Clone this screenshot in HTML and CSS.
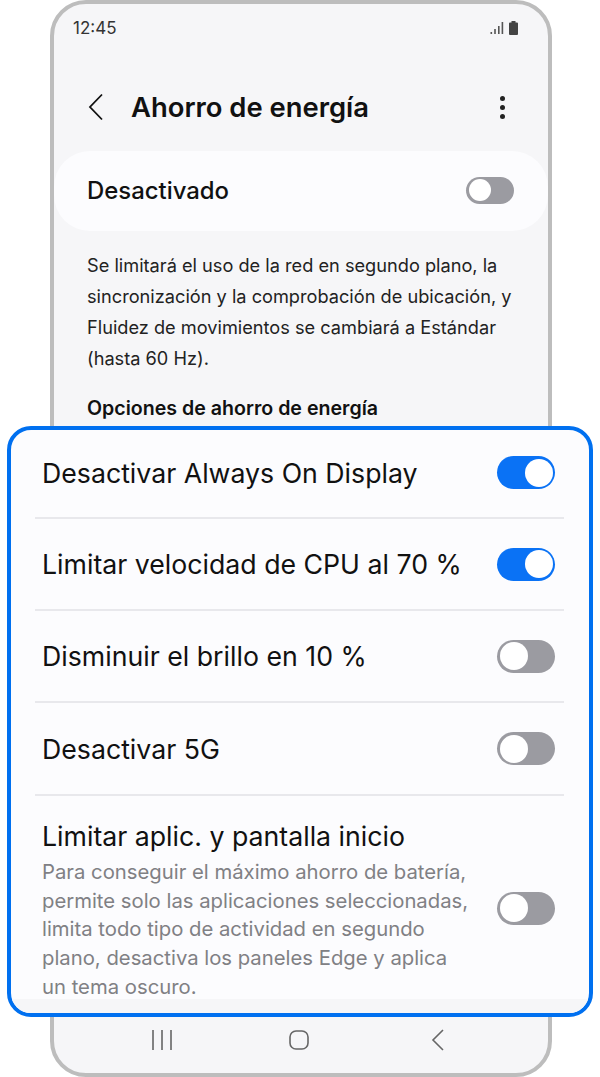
FILE: index.html
```html
<!DOCTYPE html>
<html lang="es">
<head>
    <meta charset="UTF-8">
    <meta name="viewport" content="width=device-width, initial-scale=1.0">
    <title>Ahorro de energía</title>
    <link rel="stylesheet" href="styles.css">
</head>
<body>
    <div class="phone">
        <div class="status-bar">
            <span class="clock">12:45</span>
            <svg class="status-icons" width="30" height="16" viewBox="0 0 30 16">
                <rect x="0.5" y="12" width="1.6" height="2" fill="#555"/>
                <rect x="4.2" y="9" width="1.6" height="5" fill="#555"/>
                <rect x="8" y="6" width="1.6" height="8" fill="#555"/>
                <rect x="11.6" y="2" width="1.6" height="12" fill="#555"/>
                <path d="M19 3.5 q0-1 1-1 h1.5 v-1.5 h4 v1.5 h1.5 q1 0 1 1 v10.5 q0 1-1 1 h-7 q-1 0-1-1z" fill="#444"/>
            </svg>
        </div>

        <div class="app-bar">
            <svg class="back" width="18" height="28" viewBox="0 0 18 28">
                <path d="M15 1.5 L3 14 L15 26.5" fill="none" stroke="#111" stroke-width="1.8"/>
            </svg>
            <h1>Ahorro de energía</h1>
            <div class="more"><i></i><i></i><i></i></div>
        </div>

        <div class="master-card">
            <span>Desactivado</span>
            <div class="switch small"></div>
        </div>

        <p class="intro">Se limitará el uso de la red en segundo plano, la sincronización y la comprobación de ubicación, y Fluidez de movimientos se cambiará a Estándar (hasta 60 Hz).</p>
        <h2>Opciones de ahorro de energía</h2>

        <div class="panel">
            <div class="row first">
                <span class="row-title">Desactivar Always On Display</span>
                <div class="switch on"></div>
            </div>
            <div class="row">
                <span class="row-title">Limitar velocidad de CPU al 70 %</span>
                <div class="switch on"></div>
            </div>
            <div class="row">
                <span class="row-title">Disminuir el brillo en 10 %</span>
                <div class="switch"></div>
            </div>
            <div class="row fourth">
                <span class="row-title">Desactivar 5G</span>
                <div class="switch"></div>
            </div>
            <div class="row tall">
                <div class="row-text">
                    <span class="row-title">Limitar aplic. y pantalla inicio</span>
                    <p>Para conseguir el máximo ahorro de batería, permite solo las aplicaciones seleccionadas, limita todo tipo de actividad en segundo plano, desactiva los paneles Edge y aplica un tema oscuro.</p>
                </div>
                <div class="switch"></div>
            </div>
        </div>

        <div class="nav-bar">
            <svg class="nav-recent" width="22" height="22" viewBox="0 0 22 22">
                <path d="M2 1 V21 M11 1 V21 M20 1 V21" fill="none" stroke="#666" stroke-width="1.6"/>
            </svg>
            <svg class="nav-home" width="20" height="22" viewBox="0 0 20 22">
                <rect x="1" y="2" width="18" height="18" rx="6" fill="none" stroke="#666" stroke-width="1.6"/>
            </svg>
            <svg class="nav-back" width="14" height="22" viewBox="0 0 14 22">
                <path d="M12 1 L2 11 L12 21" fill="none" stroke="#666" stroke-width="1.6"/>
            </svg>
        </div>
    </div>
</body>
</html>
```

FILE: styles.css
```css
* {
    margin: 0;
    padding: 0;
    box-sizing: border-box;
}

body {
    font-family: "Inter", "Liberation Sans", sans-serif;
    background-color: #fff;
    color: #111;
    height: 1077px;
    overflow: hidden;
}

.phone {
    position: relative;
    width: 502px;
    height: 1077px;
    margin-left: 50px;
    background-color: #f6f6f8;
    border: 4px solid #bdbdbd;
    border-radius: 36px;
    display: flex;
    flex-direction: column;
}

.status-bar {
    display: flex;
    justify-content: space-between;
    align-items: center;
    height: 24px;
    margin-top: 12px;
    padding: 0 28px 0 19px;
}

.clock {
    font-size: 17px;
    color: #333;
}

.app-bar {
    display: flex;
    align-items: center;
    height: 40px;
    margin-top: 47px;
    padding: 0 43px 0 33px;
}

.back {
    margin-right: 26px;
}

h1 {
    flex: 1;
    font-size: 27.4px;
    font-weight: 600;
    color: #111;
}

.more {
    display: flex;
    flex-direction: column;
    gap: 4px;
}

.more i {
    width: 5px;
    height: 5px;
    border-radius: 50%;
    background-color: #222;
}

.master-card {
    display: flex;
    justify-content: space-between;
    align-items: center;
    height: 80px;
    margin: 24px 0 0 0;
    padding: 0 34px 2px 33px;
    background-color: #fcfcfe;
    border-radius: 36px;
    font-size: 23.9px;
    font-weight: 500;
}

.intro {
    margin: 19px 32px 0 33px;
    font-size: 18.2px;
    line-height: 31px;
    color: #222;
}

h2 {
    margin: 22px 0 0 33px;
    font-size: 19.6px;
    font-weight: 600;
    color: #111;
}

.panel {
    position: absolute;
    left: -47px;
    top: 422px;
    width: 586px;
    height: 591px;
    padding: 0 25px 0 24px;
    background-color: #fcfcfe;
    border: 4px solid #0070f0;
    border-radius: 24px;
    overflow: hidden;
    z-index: 2;
}

/* grey strip where the scrolled list stops */
.panel::after {
    content: "";
    position: absolute;
    left: 0;
    right: 0;
    bottom: 0;
    height: 14px;
    background-color: #f6f6f8;
}

.row {
    display: flex;
    justify-content: space-between;
    align-items: center;
    height: 92px;
    border-bottom: 2px solid #e8e8ec;
    padding: 0 9px 0 7px;
}

.row.first {
    height: 89px;
    padding-bottom: 2px;
}

.row.fourth {
    height: 93px;
}

.row.tall {
    height: 220px;
    border-bottom: none;
}

.row.tall .switch {
    margin-top: 4px;
}

.row-title {
    font-size: 26.7px;
    color: #111;
}

.row-text {
    align-self: flex-start;
    width: 432px;
    padding-top: 25px;
}

.row-text .row-title {
    display: block;
    line-height: 30px;
}

.row-text p {
    margin-top: 7px;
    font-size: 20.3px;
    line-height: 28.7px;
    color: #808084;
}

.switch {
    position: relative;
    flex: none;
    width: 58px;
    height: 33px;
    border-radius: 17px;
    background-color: #9b9ba1;
}

.switch::after {
    content: "";
    position: absolute;
    top: 2.5px;
    left: 2.5px;
    width: 28px;
    height: 28px;
    border-radius: 50%;
    background-color: #fff;
}

.switch.on {
    background-color: #0a72f5;
}

.switch.on::after {
    left: 27.5px;
}

.switch.small {
    width: 48px;
    height: 27px;
}

.switch.small::after {
    top: 2.5px;
    left: 2.5px;
    width: 22px;
    height: 22px;
}

.nav-bar {
    position: absolute;
    left: 0;
    right: 0;
    bottom: 22px;
    display: flex;
    align-items: center;
    padding-left: 97px;
}

.nav-home {
    margin-left: 116px;
}

.nav-back {
    margin-left: 122px;
}
```
